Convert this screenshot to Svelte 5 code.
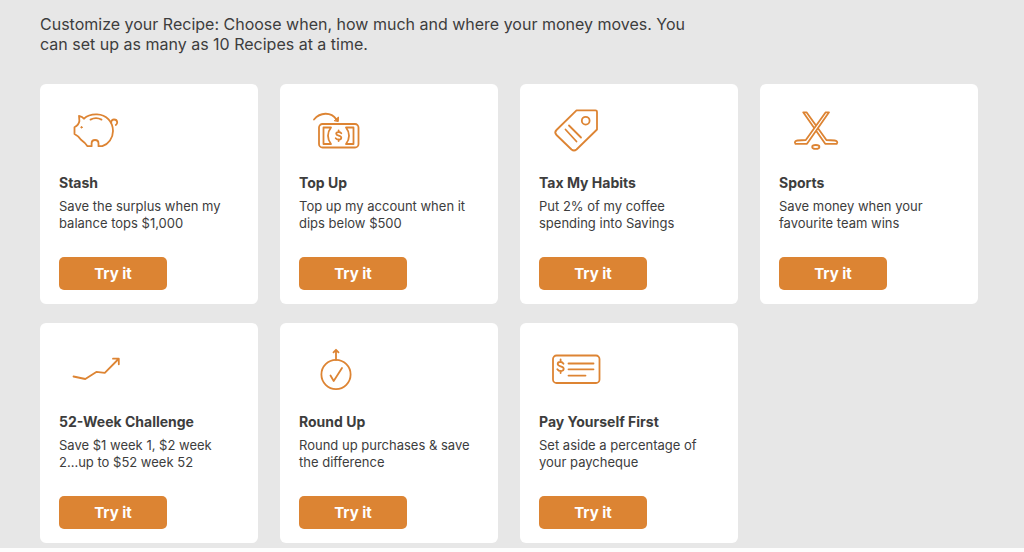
<script>
  const recipes = [
    { icon: 'pig', title: 'Stash', text: 'Save the surplus when my balance tops $1,000' },
    { icon: 'cash', title: 'Top Up', text: 'Top up my account when it dips below $500' },
    { icon: 'tag', title: 'Tax My Habits', text: 'Put 2% of my coffee spending into Savings' },
    { icon: 'hockey', title: 'Sports', text: 'Save money when your favourite team wins' },
    { icon: 'trend', title: '52-Week Challenge', text: 'Save $1 week 1, $2 week 2...up to $52 week 52' },
    { icon: 'round', title: 'Round Up', text: 'Round up purchases & save the difference' },
    { icon: 'cheque', title: 'Pay Yourself First', text: 'Set aside a percentage of your paycheque' }
  ];
</script>

<main>
  <p class="intro">Customize your Recipe: Choose when, how much and where your money moves. You can set up as many as 10 Recipes at a time.</p>
  <div class="grid">
    {#each recipes as r}
      <article class="card">
        <svg class="icon" viewBox="-1 0 70 60" aria-hidden="true">
          {#if r.icon === 'pig'}
            <path d="M19 15.8 C21.5 16.3 23 17.3 24 18.7 C27 15.7 32 14.2 37 14.4 C46.5 14.6 53 22 53 31 C53 38 48.500 44 42.300 46.200 H38.500 V43.500 C38.500 38.800 31.600 38.800 31.600 43.500 V46.200 H27.500 C26 43.800 24 42 21 39.800 C19.500 37.500 17.500 35.500 14.500 34 V27.200 C17 26 19 23.500 19.400 21 Z" />
            <path d="M30.500 19.600 C34 17.800 38 17.800 41.500 19.600 M51.300 22.300 C51 18.700 56.700 18.500 57.200 22.200 C57.200 23.700 56.700 24.500 55.800 25.100" />
            <circle class="solid" cx="21.500" cy="27.300" r="0.700" />
          {:else if r.icon === 'cash'}
            <rect x="19" y="24" width="39.500" height="23.500" rx="3.500" />
            <path d="M31 27.500 H23.500 V44 H31 C27 39 27 32.500 31 27.500 Z M46 27.500 H53.500 V44 H46 C50 39 50 32.500 46 27.500 Z" />
            <path d="M14 19.500 C20 12.200 31 11.500 36.500 19.500" />
            <path class="solid" d="M34.500 20.500 L38.500 17 L38.300 21.200 Z" />
            <path d="M41.300 33.200 C40 31.400 36.200 31.700 36.200 33.700 C36.200 36.200 41.300 35 41.300 37.700 C41.300 40 37.200 40.200 35.700 38.300 M38.600 30.500 V32 M38.600 39.500 V41" />
          {:else if r.icon === 'tag'}
            <path d="M36.500 10.300 H55.500 Q57 10.300 57 11.800 V29.500 L36.500 49.500 Q34 51.500 31.500 49.500 L16.500 35 Q14 32.500 16.500 30 Z M25.500 29.500 L36.500 41.500 M29 25.500 L41 37.500" />
            <circle cx="45.700" cy="20.700" r="3.900" />
          {:else if r.icon === 'hockey'}
            <path d="M26.500 12.300 H23.200 L45.200 43.800 H56.700 C58.200 42 56.700 40.700 54.700 40.500 L46.400 40 Z" />
            <path class="filled" d="M45.700 12.300 H49 L27 43.800 H15.500 C14 42 15.500 40.700 17.500 40.500 L25.800 40 Z" />
            <ellipse cx="35.800" cy="46.900" rx="3.600" ry="1.900" />
          {:else if r.icon === 'trend'}
            <path d="M13.500 37.500 L25.300 40 L36.300 32.900 L44.800 33.900 L58.500 20 M53 19.700 H58.800 V25.300" />
          {:else if r.icon === 'round'}
            <circle cx="36" cy="35.500" r="14.600" />
            <path d="M36 21 V11.500 M33.500 13.300 L36 10.800 L38.500 13.300 M30.500 36.500 L33.700 42 L42 29" />
          {:else}
            <rect x="13" y="16.500" width="46.500" height="27.500" rx="3.500" />
            <path d="M28.500 24.500 H53.500 M28.500 30.300 H53.500 M28.500 36.600 H45.500 M23.500 24.700 C22 22.200 17.700 22.600 17.700 25 C17.700 28 23.700 26.600 23.700 29.800 C23.700 32.500 19 32.900 17.300 30.300 M20.600 20.500 V22.500 M20.600 32 V34" />
          {/if}
        </svg>
        <h2>{r.title}</h2>
        <p>{r.text}</p>
        <button type="button">Try it</button>
      </article>
    {/each}
  </div>
</main>

<style>
  :global(body) {
    margin: 0;
    background: #fdfdfd;
  }
  main {
    padding: 14px 46px 5px 40px;
    background: #e7e7e7;
    color: #3d3d3d;
    font-family: Inter, sans-serif;
  }
  .intro {
    max-width: 660px;
    margin: 0 0 30px;
    font-size: 16px;
    line-height: 20px;
  }
  .grid {
    display: grid;
    grid-template-columns: repeat(4, 1fr);
    gap: 19px 22px;
  }
  .card {
    display: flex;
    flex-direction: column;
    align-items: flex-start;
    padding: 16px 19px 14px;
    border-radius: 6px;
    background: #fff;
  }
  .icon {
    width: 70px;
    height: 60px;
    fill: none;
    stroke: #dd8433;
    stroke-width: 1.8;
    stroke-linecap: round;
    stroke-linejoin: round;
  }
  .solid {
    fill: #dd8433;
    stroke-width: 1;
  }
  .filled {
    fill: #fff;
  }
  h2 {
    margin: 14px 0 6px;
    font-size: 14px;
    line-height: 18px;
    font-weight: 700;
  }
  .card p {
    margin: 0 0 25px;
    font-size: 13px;
    line-height: 17px;
  }
  button {
    width: 108px;
    height: 33px;
    padding: 0;
    border: 0;
    border-radius: 5px;
    background: #dc8433;
    color: #fff;
    font: 700 15px/20px Inter, sans-serif;
  }
</style>
